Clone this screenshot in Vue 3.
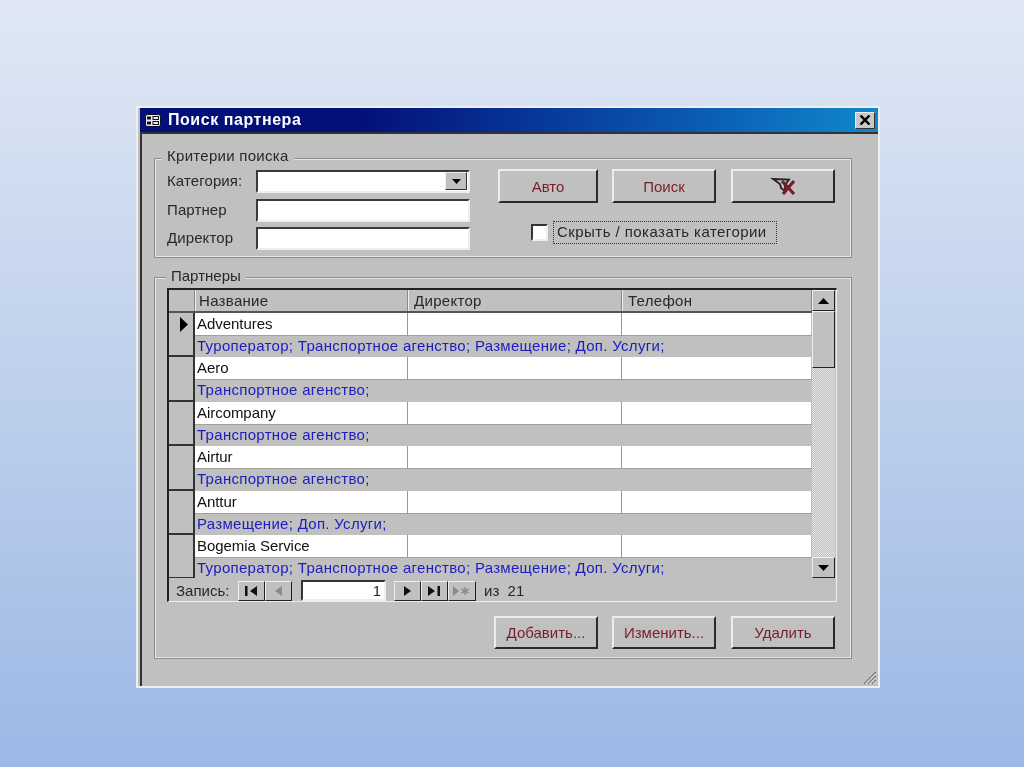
<script setup>
const rows = [
  ['Adventures', 'Туроператор; Транспортное агенство; Размещение; Доп. Услуги;'],
  ['Aero', 'Транспортное агенство;'],
  ['Aircompany', 'Транспортное агенство;'],
  ['Airtur', 'Транспортное агенство;'],
  ['Anttur', 'Размещение; Доп. Услуги;'],
  ['Bogemia Service', 'Туроператор; Транспортное агенство; Размещение; Доп. Услуги;'],
]
</script>

<template>
  <div class="page">
    <div class="window">
      <div class="titlebar">
        <svg class="ticon" width="16" height="13" viewBox="0 0 16 13">
          <rect x="0.5" y="0.5" width="15" height="12" rx="2" fill="#e8ecf4" stroke="#0a0a30" />
          <rect x="2" y="2.500" width="4" height="3" fill="#111" />
          <rect x="8" y="2.500" width="5.500" height="3" fill="none" stroke="#111" />
          <rect x="2" y="7.500" width="4" height="3" fill="#111" />
          <rect x="8" y="7.500" width="5.500" height="3" fill="none" stroke="#111" />
        </svg>
        <span class="ttext">Поиск партнера</span>
        <span class="close">
          <svg width="12" height="10" viewBox="0 0 12 10"><path d="M1.500 0.500 L10.500 9.500 M10.500 0.500 L1.500 9.500" stroke="#000" stroke-width="2.400" /></svg>
        </span>
      </div>
      <div class="body">
        <section class="group top">
          <span class="legend l1">Критерии поиска</span>
          <div class="fields">
            <div class="field">
              <label>Категория:</label>
              <div class="input"><span class="drop"><svg width="9" height="5" viewBox="0 0 9 5"><path d="M0 0H9L4.500 5Z" fill="#000" /></svg></span></div>
            </div>
            <div class="field"><label>Партнер</label><div class="input"></div></div>
            <div class="field"><label>Директор</label><div class="input"></div></div>
          </div>
          <div class="actions">
            <div class="btnrow">
              <button class="btn">Авто</button>
              <button class="btn w104">Поиск</button>
              <button class="btn w104">
                <svg width="26" height="20" viewBox="0 0 26 20">
                  <path d="M3 3 L19 3.500 L15 9 V15 L11 12 L10 8 Z" fill="none" stroke="#222" stroke-width="1.800" />
                  <path d="M12 5 L24 18 M24 5 L13 18" stroke="#7b1a2a" stroke-width="3.200" />
                </svg>
              </button>
            </div>
            <div class="check">
              <span class="box"></span>
              <span class="chk-label">Скрыть / показать категории</span>
            </div>
          </div>
        </section>

        <section class="group bottom">
          <span class="legend l2">Партнеры</span>
          <div class="sheet">
            <div class="sheet-main">
              <div class="head">
                <div class="corner"></div>
                <div class="hc c1">Название</div>
                <div class="hc c2">Директор</div>
                <div class="hc c3">Телефон</div>
              </div>
              <div class="records">
                <div v-for="(r, i) in rows" :key="r[0]" class="rec">
                  <div class="sel">
                    <svg v-if="i === 0" width="8" height="15" viewBox="0 0 8 15"><path d="M0 0L8 7.500L0 15Z" fill="#000" /></svg>
                  </div>
                  <div class="data">
                    <div class="line">
                      <div class="cell c1">{{ r[0] }}</div>
                      <div class="cell c2"></div>
                      <div class="cell c3"></div>
                    </div>
                    <div class="cats">{{ r[1] }}</div>
                  </div>
                </div>
              </div>
            </div>
            <div class="scroll">
              <span class="sbtn"><svg width="11" height="6" viewBox="0 0 11 6"><path d="M5.500 0L11 6H0Z" fill="#000" /></svg></span>
              <span class="thumb"></span>
              <span class="track"></span>
              <span class="sbtn"><svg width="11" height="6" viewBox="0 0 11 6"><path d="M0 0H11L5.500 6Z" fill="#000" /></svg></span>
            </div>
            <div class="nav">
              <span class="nav-label">Запись:</span>
              <span class="nb"><svg width="13" height="10" viewBox="0 0 13 10"><path d="M0 0H2.500V10H0ZM12 0V10L5 5Z" fill="#111" /></svg></span>
              <span class="nb"><svg width="7" height="10" viewBox="0 0 7 10"><path d="M7 0V10L0 5Z" fill="#8a8a8a" /></svg></span>
              <span class="num">1</span>
              <span class="nb"><svg width="7" height="10" viewBox="0 0 7 10"><path d="M0 0V10L7 5Z" fill="#111" /></svg></span>
              <span class="nb"><svg width="13" height="10" viewBox="0 0 13 10"><path d="M0 0V10L7 5ZM9.500 0H12V10H9.500Z" fill="#111" /></svg></span>
              <span class="nb wide"><svg width="18" height="10" viewBox="0 0 18 10"><path d="M0 0V10L6 5Z" fill="#8a8a8a" /><path d="M12 1V9M8.500 3L15.500 7M15.500 3L8.500 7" stroke="#8a8a8a" stroke-width="1.500" /></svg></span>
              <span class="of">из &nbsp;21</span>
            </div>
          </div>
          <div class="bottom-btns">
            <button class="btn w104">Добавить...</button>
            <button class="btn w104">Изменить...</button>
            <button class="btn w104">Удалить</button>
          </div>
        </section>
      </div>
      <svg class="grip" width="16" height="16" viewBox="0 0 16 16">
        <path d="M15 3L3 15M15 7L7 15M15 11L11 15" stroke="#777" stroke-width="1.300" />
        <path d="M15 4.500L4.500 15M15 8.500L8.500 15M15 12.500L12.500 15" stroke="#eee" stroke-width="1" />
      </svg>
    </div>
  </div>
</template>

<style>
html, body { margin: 0; }
</style>

<style scoped>
.page {
  width: 1024px;
  height: 767px;
  box-sizing: border-box;
  padding: 106px 0 0 136px;
  background: linear-gradient(180deg, #e0e8f4 0%, #9cb8e5 100%);
  overflow: hidden;
  font-family: "Liberation Sans", Arial, sans-serif;
  font-size: 15px;
  color: #282828;
}
.window {
  position: relative;
  width: 744px;
  height: 582px;
  box-sizing: border-box;
  background: #c0c0c0;
  border: 2px solid #eeeeee;
  filter: blur(0.5px);
  display: flex;
  flex-direction: column;
}
.titlebar {
  height: 26px;
  flex: none;
  box-sizing: border-box;
  margin-left: 2px;
  display: flex;
  align-items: center;
  padding: 0 3px 0 5px;
  background: linear-gradient(90deg, #04107a 0%, #04107a 30%, #0a5ab4 75%, #1088cc 100%);
  border-bottom: 2px solid #333;
  color: #fff;
}
.ticon { flex: none; }
.ttext {
  margin-left: 7px;
  font-weight: 700;
  font-size: 16px;
  letter-spacing: 0.55px;
}
.close {
  margin-left: auto;
  width: 20px;
  height: 17px;
  box-sizing: border-box;
  background: #c8c8c8;
  border: 1px solid;
  border-color: #eee #333 #333 #eee;
  display: flex;
  align-items: center;
  justify-content: center;
}
.body {
  flex: 1;
  margin-left: 2px;
  border-left: 2px solid #333;
  padding: 24px 0 0 12px;
  display: flex;
  flex-direction: column;
  gap: 19px;
}
.group {
  position: relative;
  box-sizing: border-box;
  border: 1px solid #8c8c8c;
  outline: 1px solid #e6e6e6;
  outline-offset: -2px;
  width: 698px;
}
.group.top {
  height: 100px;
  display: flex;
  padding: 11px 15px 0 12px;
}
.group.bottom {
  height: 382px;
  padding: 10px 15px 0 12px;
}
.legend {
  position: absolute;
  background: #c0c0c0;
  padding: 0 5px;
  white-space: nowrap;
  line-height: 16px;
}
.l1 { top: -11px; left: 7px; letter-spacing: 0.28px; }
.l2 { top: -10px; left: 11px; }
.fields {
  width: 303px;
  flex: none;
  display: flex;
  flex-direction: column;
  gap: 5.500px;
}
.field {
  display: flex;
  align-items: center;
  height: 23px;
}
.field label { width: 89px; flex: none; letter-spacing: 0.1px; position: relative; top: -1px; }
.input {
  position: relative;
  width: 214px;
  height: 23px;
  box-sizing: border-box;
  background: #fff;
  border: 2px solid;
  border-color: #3a3a3a #eeeeee #eeeeee #3a3a3a;
}
.drop {
  position: absolute;
  right: 1px;
  top: 0;
  width: 22px;
  height: 18px;
  box-sizing: border-box;
  background: #c0c0c0;
  border: 1px solid;
  border-color: #eee #333 #333 #eee;
  display: flex;
  align-items: center;
  justify-content: center;
}
.actions {
  flex: 1;
  display: flex;
  flex-direction: column;
}
.btnrow {
  display: flex;
  gap: 14px;
  margin-left: 28px;
  margin-top: -1px;
}
.btn {
  width: 100px;
  height: 34px;
  box-sizing: border-box;
  padding: 0;
  background: #c0c0c0;
  border: 2px solid;
  border-color: #ececec #2a2a2a #2a2a2a #ececec;
  color: #7a1c2c;
  font: inherit;
  display: flex;
  align-items: center;
  justify-content: center;
}
.w104 { width: 104px; }
.btnrow .btn + .btn + .btn { margin-left: 1px; }
.check {
  display: flex;
  align-items: center;
  margin: 18px 0 0 61px;
  gap: 5px;
}
.box {
  width: 17px;
  height: 17px;
  box-sizing: border-box;
  background: #fff;
  border: 2px solid;
  border-color: #333 #eee #eee #333;
}
.chk-label {
  width: 224px;
  height: 23px;
  box-sizing: border-box;
  border: 1px dotted #333;
  line-height: 20px;
  padding-left: 3px;
  white-space: nowrap;
  letter-spacing: 0.45px;
}
.sheet {
  width: 670px;
  height: 314px;
  box-sizing: border-box;
  position: relative;
  border-left: 2px solid #222;
  border-top: 2px solid #222;
  border-right: 1px solid #eee;
  border-bottom: 1px solid #eee;
  display: grid;
  grid-template-columns: 643px 23px;
  grid-template-rows: 288px 1fr;
}
.sheet-main { overflow: hidden; }
.head {
  display: flex;
  height: 23px;
  box-sizing: border-box;
  border-bottom: 2px solid #555;
}
.corner { width: 26px; flex: none; background: #c0c0c0; border-right: 1px solid #888; box-sizing: border-box; }
.hc {
  box-sizing: border-box;
  border-right: 1px solid #888;
  border-left: 1px solid #eee;
  line-height: 21px;
  padding-left: 3px;
  white-space: nowrap;
  letter-spacing: 0.3px;
}
.c1 { width: 213px; flex: none; }
.c2 { width: 214px; flex: none; }
.c3 { width: 190px; flex: none; }
.hc.c2, .hc.c3 { padding-left: 5px; }
.rec {
  display: flex;
  height: 44.400px;
}
.sel {
  width: 26px;
  flex: none;
  box-sizing: border-box;
  background: #c0c0c0;
  border-right: 2px solid #333;
  border-bottom: 2px solid #333;
  display: flex;
  align-items: flex-start;
  justify-content: flex-end;
  padding: 4px 5px 0 0;
}
.data { flex: 1; min-width: 0; }
.line { display: flex; height: 22px; }
.cell {
  box-sizing: border-box;
  background: #fff;
  border-right: 1px solid #999;
  line-height: 22px;
  padding-left: 2px;
  white-space: nowrap;
  color: #111;
  letter-spacing: -0.05px;
}
.cell.c3 { width: 189px; border-right: 0; }
.cats {
  height: 22px;
  line-height: 20px;
  color: #1c1cc0;
  padding-left: 2px;
  white-space: nowrap;
  border-top: 1px solid #a0a0a0;
  box-sizing: border-box;
  letter-spacing: 0.3px;
}
.scroll {
  display: flex;
  flex-direction: column;
}
.sbtn {
  height: 21px;
  flex: none;
  box-sizing: border-box;
  background: #c0c0c0;
  border: 1px solid;
  border-color: #eee #222 #222 #eee;
  display: flex;
  align-items: center;
  justify-content: center;
}
.thumb {
  height: 57px;
  flex: none;
  box-sizing: border-box;
  background: #c0c0c0;
  border: 1px solid;
  border-color: #eee #222 #222 #eee;
}
.track {
  flex: 1;
  background-color: #d4d4d4;
  background-image: repeating-conic-gradient(#c0c0c0 0 25%, #e4e4e4 0 50%);
  background-size: 2px 2px;
}
.nav {
  grid-column: 1 / -1;
  display: flex;
  align-items: center;
  padding: 2px 0 0 7px;
  background: #c0c0c0;
}
.nav-label { width: 62px; flex: none; }
.nb {
  width: 27px;
  height: 20px;
  box-sizing: border-box;
  background: #c0c0c0;
  border: 1px solid;
  border-color: #eee #222 #222 #eee;
  display: flex;
  align-items: center;
  justify-content: center;
  flex: none;
}
.nb.wide { width: 28px; }
.num {
  width: 85px;
  height: 21px;
  box-sizing: border-box;
  margin: 0 8px 0 9px;
  background: #fff;
  border: 2px solid;
  border-color: #333 #eee #eee #333;
  text-align: right;
  padding-right: 3px;
  line-height: 18px;
  flex: none;
}
.of { margin-left: 8px; white-space: nowrap; }
.bottom-btns {
  display: flex;
  gap: 14px;
  margin: 14px 0 0 327px;
}
.bottom-btns .btn { height: 33px; }
.bottom-btns .btn + .btn + .btn { margin-left: 1px; }
.grip { position: absolute; right: 1px; bottom: 1px; }
</style>
